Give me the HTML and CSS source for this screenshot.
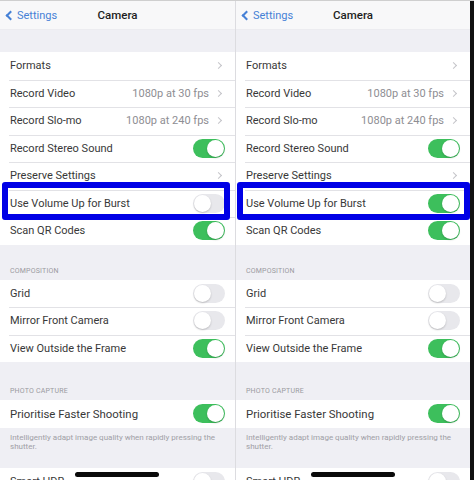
FILE: index.html
```html
<!doctype html>
<html lang="en">
  <head>
    <meta charset="UTF-8" />
    <meta name="viewport" content="width=device-width, initial-scale=1.0" />
    <title>Camera Settings</title>
    <link rel="stylesheet" href="styles.css">
  </head>

  <body>
    <div class="screens">
      <section class="phone">
        <header class="nav">
          <span class="nav-back"><span class="back-chevron"></span>Settings</span>
          <span class="nav-title">Camera</span>
        </header>
        <div class="group-gap"></div>
        <ul class="group">
          <li class="row"><span class="label">Formats</span><span class="chevron"></span></li>
          <li class="row"><span class="label">Record Video</span><span class="value">1080p at 30 fps</span><span class="chevron"></span></li>
          <li class="row"><span class="label">Record Slo-mo</span><span class="value">1080p at 240 fps</span><span class="chevron"></span></li>
          <li class="row"><span class="label">Record Stereo Sound</span><span class="toggle on"></span></li>
          <li class="row"><span class="label">Preserve Settings</span><span class="chevron"></span></li>
          <li class="row"><span class="label">Use Volume Up for Burst</span><span class="toggle"></span></li>
          <li class="row"><span class="label">Scan QR Codes</span><span class="toggle on"></span></li>
        </ul>
        <div class="group-title">COMPOSITION</div>
        <ul class="group">
          <li class="row"><span class="label">Grid</span><span class="toggle"></span></li>
          <li class="row"><span class="label">Mirror Front Camera</span><span class="toggle"></span></li>
          <li class="row"><span class="label">View Outside the Frame</span><span class="toggle on"></span></li>
        </ul>
        <div class="group-title tall">PHOTO CAPTURE</div>
        <ul class="group">
          <li class="row big"><span class="label">Prioritise Faster Shooting</span><span class="toggle on"></span></li>
        </ul>
        <p class="group-note">Intelligently adapt image quality when rapidly pressing the shutter.</p>
        <ul class="group">
          <li class="row"><span class="label">Smart HDR</span><span class="toggle"></span></li>
        </ul>
        <div class="highlight"></div>
        <div class="home-bar"></div>
      </section>

      <section class="phone">
        <header class="nav">
          <span class="nav-back"><span class="back-chevron"></span>Settings</span>
          <span class="nav-title">Camera</span>
        </header>
        <div class="group-gap"></div>
        <ul class="group">
          <li class="row"><span class="label">Formats</span><span class="chevron"></span></li>
          <li class="row"><span class="label">Record Video</span><span class="value">1080p at 30 fps</span><span class="chevron"></span></li>
          <li class="row"><span class="label">Record Slo-mo</span><span class="value">1080p at 240 fps</span><span class="chevron"></span></li>
          <li class="row"><span class="label">Record Stereo Sound</span><span class="toggle on"></span></li>
          <li class="row"><span class="label">Preserve Settings</span><span class="chevron"></span></li>
          <li class="row"><span class="label">Use Volume Up for Burst</span><span class="toggle on"></span></li>
          <li class="row"><span class="label">Scan QR Codes</span><span class="toggle on"></span></li>
        </ul>
        <div class="group-title">COMPOSITION</div>
        <ul class="group">
          <li class="row"><span class="label">Grid</span><span class="toggle"></span></li>
          <li class="row"><span class="label">Mirror Front Camera</span><span class="toggle"></span></li>
          <li class="row"><span class="label">View Outside the Frame</span><span class="toggle on"></span></li>
        </ul>
        <div class="group-title tall">PHOTO CAPTURE</div>
        <ul class="group">
          <li class="row big"><span class="label">Prioritise Faster Shooting</span><span class="toggle on"></span></li>
        </ul>
        <p class="group-note">Intelligently adapt image quality when rapidly pressing the shutter.</p>
        <ul class="group">
          <li class="row"><span class="label">Smart HDR</span><span class="toggle"></span></li>
        </ul>
        <div class="highlight wide"></div>
        <div class="home-bar"></div>
      </section>

      <div class="edge"></div>
    </div>
  </body>
</html>
```

FILE: styles.css
```css
:root {
  --group-bg: #efeff4;
  --row-bg: #ffffff;
  --text-color: #383838;
  --text-secondary: #8e8e93;
  --separator: #e2e2e6;
  --ios-blue: #4681d6;
  --ios-green: #3dbf5c;
  --toggle-off: #e8e8ec;
  --highlight: #0000e6;
}

* {
  margin: 0;
  padding: 0;
  box-sizing: border-box;
}

body {
  width: 474px;
  height: 480px;
  overflow: hidden;
  background: #ffffff;
  font-family: Roboto, 'Liberation Sans', Arial, sans-serif;
  color: var(--text-color);
}

.screens {
  display: flex;
  height: 480px;
  border-top: 1px solid #cfcfcf;
}

.phone {
  position: relative;
  width: 235px;
  height: 100%;
  overflow: hidden;
  background: var(--group-bg);
}

.phone + .phone {
  border-left: 1px solid #dcdce0;
}

.edge {
  width: 4px;
  background: #111;
}

.nav {
  position: relative;
  height: 29px;
  display: flex;
  align-items: center;
  justify-content: center;
  background: #f8f8f9;
  border-bottom: 1px solid #ececf0;
}

.nav-back {
  position: absolute;
  left: 5px;
  top: 8px;
  display: flex;
  align-items: center;
  gap: 3px;
  font-size: 11px;
  color: var(--ios-blue);
}

.back-chevron {
  width: 7px;
  height: 7px;
  border-left: 2px solid var(--ios-blue);
  border-bottom: 2px solid var(--ios-blue);
  transform: rotate(45deg);
  margin-left: 2px;
}

.nav-title {
  font-size: 11.5px;
  font-weight: 500;
  color: #1e1e1e;
}

.group-gap {
  height: 22px;
}

.group {
  list-style: none;
  background: var(--row-bg);
}

.row {
  height: 27.5px;
  display: flex;
  align-items: center;
  gap: 5px;
  padding: 0 10px 0 10px;
  position: relative;
  font-size: 11px;
}

.row + .row::before {
  content: '';
  position: absolute;
  top: 0;
  left: 9px;
  right: 0;
  height: 1px;
  background: var(--separator);
}

.row.big {
  font-size: 11.4px;
}

.label {
  flex: 1;
  white-space: nowrap;
}

.value {
  color: var(--text-secondary);
  white-space: nowrap;
}

.chevron {
  width: 5px;
  height: 5px;
  margin: 0 4px 0 2px;
  border-top: 1px solid #c4c4c9;
  border-right: 1px solid #c4c4c9;
  transform: rotate(45deg);
}

.toggle {
  position: relative;
  width: 32px;
  height: 19px;
  border-radius: 10px;
  background: var(--toggle-off);
  flex-shrink: 0;
}

.toggle::after {
  content: '';
  position: absolute;
  top: 1px;
  left: 1px;
  width: 17px;
  height: 17px;
  border-radius: 50%;
  background: #ffffff;
  box-shadow: 0 1px 2px rgba(0, 0, 0, 0.2);
}

.toggle.on {
  background: var(--ios-green);
}

.toggle.on::after {
  left: 14px;
}

.group-title {
  height: 35px;
  padding: 0 10px 5px;
  display: flex;
  align-items: flex-end;
  font-size: 7px;
  letter-spacing: 0.2px;
  color: #9a9aa0;
}

.group-title.tall {
  height: 38px;
}

.group-note {
  padding: 5px 10px 16px;
  font-size: 8px;
  line-height: 9.5px;
  color: #a0a0a6;
}

.highlight {
  position: absolute;
  left: 2px;
  top: 181px;
  width: 228px;
  height: 38px;
  border: 6px solid var(--highlight);
  border-radius: 3px;
}

.highlight.wide {
  left: 1px;
  width: 233px;
}

.home-bar {
  position: absolute;
  left: 75px;
  top: 471px;
  width: 84px;
  height: 5px;
  border-radius: 3px;
  background: #0a0a0a;
}
```
